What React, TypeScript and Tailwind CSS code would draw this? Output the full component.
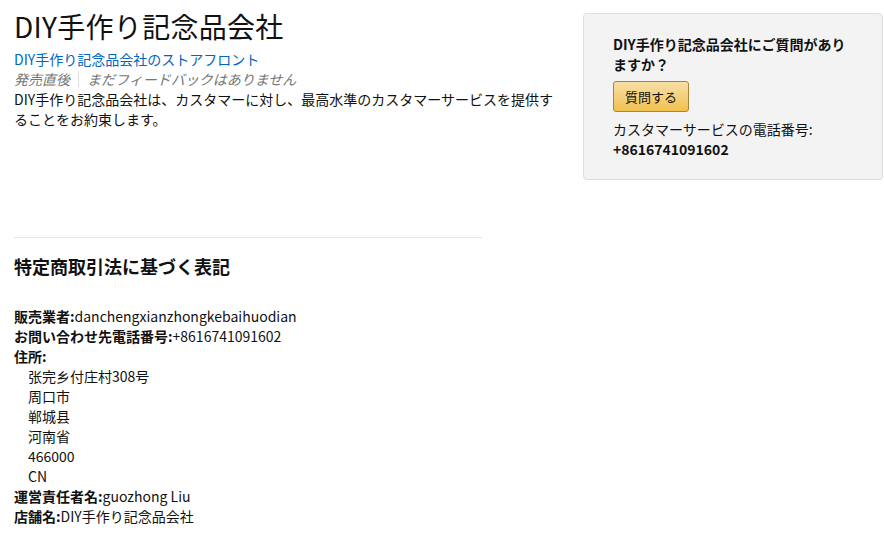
import React from "react";

const font = { fontFamily: '"Noto Sans CJK JP", "Noto Sans", sans-serif' };

export default function App() {
  return (
    <div className="min-h-[542px] w-[884px] bg-white text-[14px] leading-[20px] text-[#111]" style={font}>
      <div className="flex pl-[14px] pt-[6px]">
        <div className="w-[552px]">
          <h1 className="text-[28px] leading-[40px] font-normal tracking-[0.3px] text-[#111]">DIY手作り記念品会社</h1>
          <div className="mt-[3px] text-[#0066c0]">DIY手作り記念品会社のストアフロント</div>
          <div className="flex items-center italic text-[#767676]">
            <span>発売直後</span>
            <span className="mx-[8px] h-[16px] w-px bg-[#ddd]"></span>
            <span>まだフィードバックはありません</span>
          </div>
          <p>DIY手作り記念品会社は、カスタマーに対し、最高水準のカスタマーサービスを提供することをお約束します。</p>
        </div>
        <div className="ml-[17px] mt-[7px] w-[300px] rounded-[4px] border border-[#ddd] bg-[#f3f3f3] pb-[20px] pl-[29px] pr-[30px] pt-[20px]">
          <div className="font-bold">DIY手作り記念品会社にご質問がありますか？</div>
          <button className="mt-[7px] h-[31px] rounded-[3px] border border-[#a88734] bg-gradient-to-b from-[#f7dfa5] to-[#f0c14b] px-[11px] text-[13px] text-[#111]">
            質問する
          </button>
          <div className="mt-[7px]">カスタマーサービスの電話番号:</div>
          <div className="font-bold">+8616741091602</div>
        </div>
      </div>
      <div className="ml-[14px] mt-[57px] w-[468px] border-t border-[#e7e7e7]"></div>
      <div className="pl-[14px]">
        <h2 className="mt-[16px] text-[18px] font-bold leading-[24px]">特定商取引法に基づく表記</h2>
        <div className="mt-[28px]">
          <div><span className="font-bold">販売業者:</span>danchengxianzhongkebaihuodian</div>
          <div><span className="font-bold">お問い合わせ先電話番号:</span>+8616741091602</div>
          <div className="font-bold">住所:</div>
          <div className="pl-[14px]">
            <div>张完乡付庄村308号</div>
            <div>周口市</div>
            <div>郸城县</div>
            <div>河南省</div>
            <div>466000</div>
            <div>CN</div>
          </div>
          <div><span className="font-bold">運営責任者名:</span>guozhong Liu</div>
          <div><span className="font-bold">店舗名:</span>DIY手作り記念品会社</div>
        </div>
      </div>
    </div>
  );
}
